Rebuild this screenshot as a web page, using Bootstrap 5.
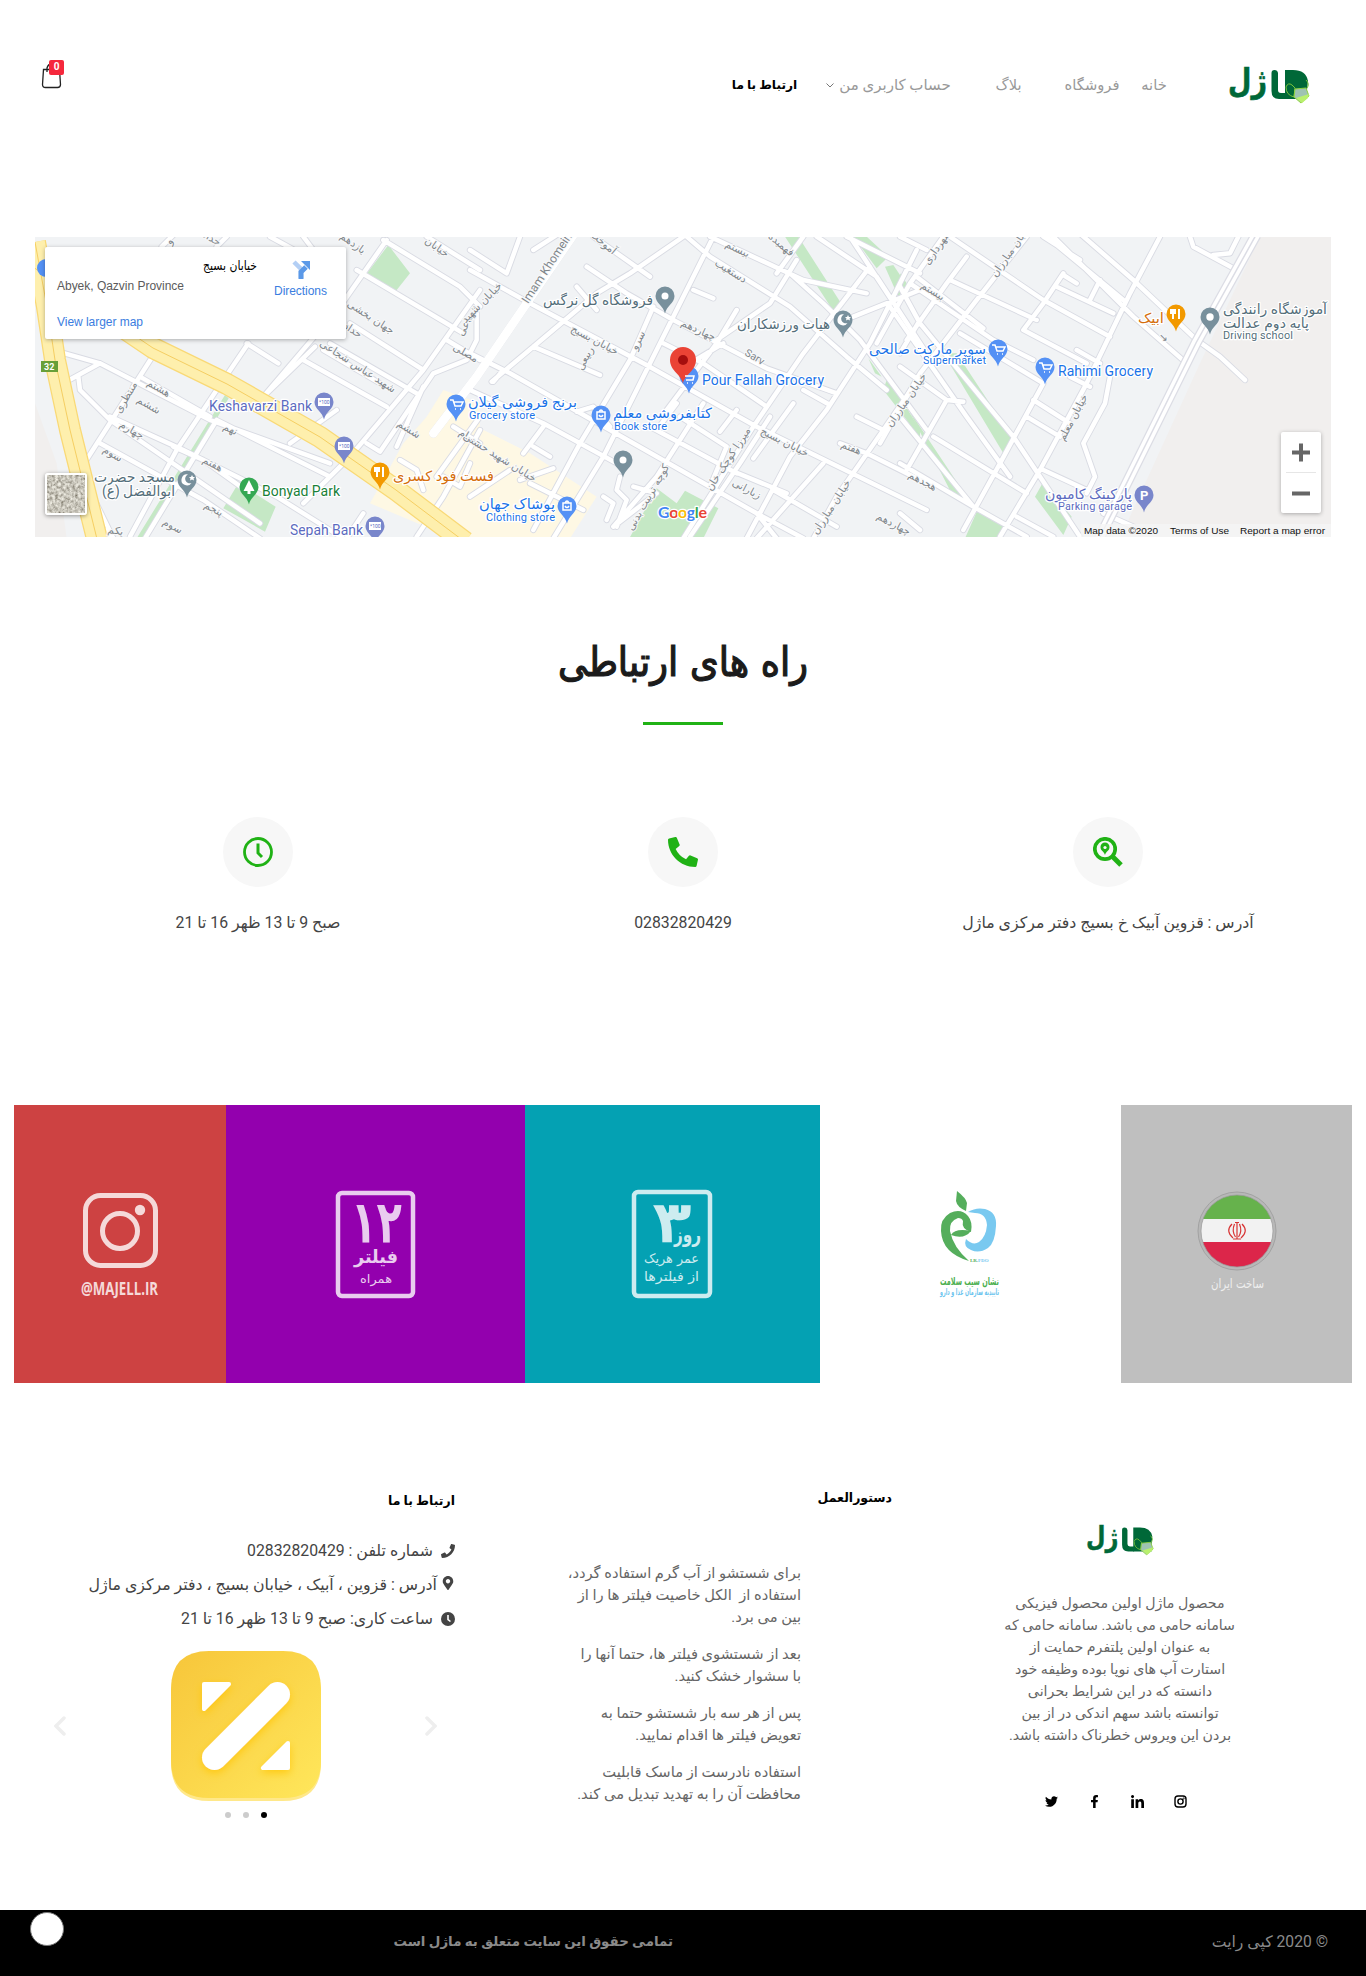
<!DOCTYPE html>
<html lang="fa" dir="rtl">
<head>
<meta charset="utf-8">
<meta name="viewport" content="width=device-width, initial-scale=1">
<title>ارتباط با ما - ماژل</title>
<link href="https://cdn.jsdelivr.net/npm/bootstrap@5.3.0/dist/css/bootstrap.min.css" rel="stylesheet">
<style>
body{font-family:Roboto,"DejaVu Sans",sans-serif;color:#444;background:#fff;overflow-x:hidden}
a{color:inherit;text-decoration:none}
svg{display:block}
svg text{direction:ltr}
.site-head{height:237px;padding:60px 56px 0 41px}
.main-nav{margin-right:60px;font-size:14.7px;line-height:24px;color:#999;padding-top:13px}
.main-nav a{white-space:nowrap;display:flex;justify-content:center;align-items:center}
.main-nav a:nth-child(1){width:28px;margin-left:22px}
.main-nav a:nth-child(2){width:52px;margin-left:43px}
.main-nav a:nth-child(3){width:29px;margin-left:43px}
.main-nav a:nth-child(4){width:125px;margin-left:29px;gap:5px;font-size:15px}
.main-nav a:nth-child(5){width:65px;color:#000;font-weight:700;font-size:12.2px}
.cart-count{position:absolute;left:8px;top:0;width:15px;height:15px;border-radius:2px;background:#f5283c;color:#fff;font:700 10px/14px Roboto,sans-serif;text-align:center}
.map-box{height:300px;margin:0 35px;position:relative}
.map-card{position:absolute;left:10px;top:10px;width:301px;height:92px;background:#fff;border-radius:2px;box-shadow:0 1px 4px rgba(0,0,0,.3);font:12px "Liberation Sans",sans-serif;color:#5b5b5b;direction:ltr}
.zoomer{position:absolute;left:1246px;top:195px;width:40px;height:81px;background:#fff;border-radius:2px;box-shadow:0 1px 4px rgba(0,0,0,.3)}
.sat{position:absolute;left:10px;top:236px;width:42px;height:42px;border:2px solid #fff;border-radius:3px;box-shadow:0 1px 4px rgba(0,0,0,.4)}
.ways{padding-top:101px;height:280px}
.ways h1{font-family:"DejaVu Sans Condensed","DejaVu Sans",sans-serif;font-size:40.8px;line-height:48px;font-weight:400;-webkit-text-stroke:1.2px #1b1b1b;color:#1b1b1b;margin:0;white-space:nowrap}
.bar{width:80px;height:3px;background:#20b215;margin-top:36px}
.info{height:288px;margin:0 45px}
.info-item{width:425px}
.disc{width:70px;height:70px;border-radius:50%;background:#f7f7f7}
.info p{font-size:15.8px;line-height:24px;margin:24px 0 0;white-space:nowrap}
.tiles{height:278px;margin:0 14px}
.t-gray{width:231px;background:#bfbfbf}.t-white{width:301px}.t-teal{width:295px;background:#04a1b3}.t-purple{width:299px;background:#9300ae}.t-red{width:212px;background:#cd4242}
.foot{height:527px}
.foot-about{width:230px;margin-right:131px;padding-top:139px}
.foot-text{font-size:14.2px;line-height:22px;color:#666;white-space:nowrap}
.foot-text p{margin:0 0 15px}
.about-copy{margin-top:36px}
.social-row{gap:30px;padding-top:49px;margin-right:8px}
.foot-guide{width:230px;margin-right:204px}
.foot-guide .foot-text{font-size:14.7px}
.foot h2{font-size:12.5px;line-height:22px;font-weight:700;color:#000;margin:0;white-space:nowrap}
.foot-guide h2{margin:104px -91px 53px 0}
.foot-contact{width:401px;margin-right:116px;padding-top:107px}
.foot-contact ul{margin-top:22px}
.foot-contact li{height:34px;font-size:15.8px;line-height:34px;white-space:nowrap}
.carousel-row{width:383px;margin-right:18px}
.carousel-row.stage{margin-top:15px}
.dots{gap:12px;padding-top:11px}
.dots i{width:6px;height:6px;border-radius:50%;background:#ccc}
.dots i:first-child{background:#000}
.bottom-bar{height:66px;background:#000;color:#8a8a8a;font-size:15.7px;line-height:64px;padding-right:38px;position:relative;white-space:nowrap}
.bottom-bar .copy{width:116px}
.bottom-bar .rights{margin-right:539px;font-weight:700;font-size:13.4px;width:279px}
.bubble{position:absolute;left:30px;top:2px;width:34px;height:34px;border-radius:50%;background:#fff;border:1px solid #777}
</style>
</head>
<body>
<svg width="0" height="0" class="position-absolute">
<defs>
<symbol id="logo" viewBox="0 0 82 40">
<text x="0" y="28" font-family="DejaVu Sans" font-weight="700" font-size="33" fill="#006838" stroke="#006838" stroke-width=".6" textLength="39" lengthAdjust="spacingAndGlyphs">ژل</text>
<path d="M43.500 9q0-3 3-3t3.500 3v17q0 3 3 3h5v6h-7q-7.500 0-7.500-8z" fill="#006838"/>
<path d="M57 6h8q13 0 15 11l-1 9v9H57z" fill="#006838"/>
<path d="M58 23q2-5 6-2l3 3-1 9q-8-2-8-10zM78 16q4 4 1 8" fill="none" stroke="#79c23b" stroke-width="1"/>
<path d="M67 25l11-1 3 8-8 7-7-6z" fill="#9fc3b2" stroke="#8fd13f" stroke-width="1"/><path d="M68 34l13-4-1 4-6 5z" fill="#b9f06d"/>
</symbol>
<symbol id="pin" viewBox="-10 -10 20 29"><path d="M0 17.500C-1.500 10-9.500 7-9.500 0a9.500 9.500 0 0 1 19 0C9.500 7 1.500 10 0 17.500z"/></symbol>
</defs>
</svg>

<header class="site-head d-flex align-items-start">
<a href="#"><svg width="82" height="40" class="mt-1"><use href="#logo"/></svg></a>
<nav class="main-nav d-flex">
<a href="#">خانه</a><a href="#">فروشگاه</a><a href="#">بلاگ</a>
<a href="#">حساب کاربری من <svg width="8" height="5" viewBox="0 0 8 5"><path d="M.5.5 4 4 7.500.5" fill="none" stroke="#777"/></svg></a>
<a href="#">ارتباط با ما</a>
</nav>
<a href="#" class="me-auto position-relative"><svg width="23" height="30" viewBox="0 0 23 30"><path d="M2.500 9.500h16l1 15q0 3-3 3h-12q-3 0-3-3zM6 12V8q1-4 5-4t5 4v4" fill="none" stroke="#222" stroke-width="1.300"/></svg><span class="cart-count">0</span></a>
</header>

<main>
<section class="map-box">
<svg width="1296" height="300" viewBox="0 0 1296 300" font-family="Roboto,'DejaVu Sans',sans-serif">
<defs>
<g id="roads" fill="none" stroke-linejoin="round" stroke-linecap="round">
<g transform="translate(-5 -7) scale(.33333)">
<path d="M380 360 150 720M655 340 560 480 440 660 300 920M560 570 345 925M855 350 700 500M1070 30 930 230M85 365 210 400 540 570 900 700M145 440 150 480 240 570 690 880M210 640 520 810 690 925M240 560 460 660 740 800 940 925M560 570 900 740M330 440 540 560M650 340 745 400M820 390 1070 530M900 340 1160 490M960 280 1180 420M980 120 1300 310M1060 30 1290 170 1350 230M700 500 930 230M960 680 1180 420 1350 180M1010 640 1050 665 1210 430 1310 390M1190 20 1350 120M395 50 430 15M820 20 850 60M720 20 830 80M960 680 820 820M1000 850 950 925M1180 470 1100 650M190 870 250 925M210 400 100 460M150 720 250 925M1110 690 1160 720 1180 780M1250 330 1350 390M1270 590 1350 640M1350 560 1220 740M430 650 520 690 660 790M590 20 560 50M880 360 1050 460M780 640 920 540"/>
<path d="M1160 920 1240 800 1350 600M1240 740 1290 770 1320 700"/>
</g>
<g transform="translate(435 -7) scale(.33333)">
<path d="M0 120 180 220 520 400 860 590 1370 840M0 480 220 580 440 700M0 370 120 430 420 600 860 850 1000 925M550 230 480 390 330 640 190 900M730 20 540 400 400 680 250 925M640 20 480 130 380 190 190 350 65 455M350 110 470 190 610 270 890 415 1100 490M320 170 380 240M370 20 540 140M650 20 720 80 960 230 1130 380 1250 480M720 20 1000 150 1190 190M580 340 700 400 890 530M800 240 740 340 590 540M980 90 900 220 740 330M1340 60 1200 340 1070 540 960 680 830 925M1200 110 1000 370 850 590 640 925M960 130 1060 220 1170 330 1370 600M1040 20 1220 140 1350 340M1140 20 1370 370M670 180 730 205M970 520 850 685M1000 480 1080 525M800 540 750 605M540 590 800 730M620 520 560 600M700 520 560 740 430 890M20 250 20 330 0 370M150 20 110 130 0 60M1130 20 1350 130M1350 180 1150 260M100 420 70 455M220 590 160 670M320 545 370 530 420 590M190 350 390 435M450 740 440 780 470 810 440 890M400 800 430 820 410 870M490 770 560 790 430 890M150 750 250 715M190 650 240 680M180 760 340 840M0 800 120 720M1110 640 1190 670 1370 760M1060 700 860 925M1160 560 1240 600 1100 800 1030 925M1240 600 1350 440M910 780 1100 890M660 920 810 700 900 560M1000 20 920 130 M190 60 260 15M630 560 770 650 720 770M780 720 950 790M860 850 920 925M660 400 760 340"/>
<path d="M310 15 170 220 20 440-110 610" stroke-width="26"/>
</g>
<g transform="translate(865 -7) scale(.33333)">
<path d="M150 20 430 210 630 320M0 20 80 60M130 20 30 160-70 340M200 80 140 160 20 330M380 20 230 210 60 430-60 640M460 20 470 30 700 260 860 400M545 15 700 150 890 330 960 380 1035 450M440 20 670 210M780 20 690 190 560 460 420 720 300 920M490 130 430 220 370 300M490 135 530 160M600 150 570 210M470 170 640 250M30 160 280 330 400 390M50 140 250 295M150 150 410 270M370 300 560 400M430 460 300 700 190 900M180 310 430 460M400 510 510 580 M380 560 430 590 480 620M530 360 600 400M430 20 540 90 M0 170 60 280 340 620 540 920M-30 230 200 560 330 740M0 410 140 510 190 515M140 510 60 650 20 720M0 700 220 830 380 920M100 620 380 790M430 720 560 780M350 860 460 920M630 440 615 520 550 640 585 740 560 790M0 850 60 900M870 20 880 50 1000 115M940 75 990 70 1015 20M510 440 570 470M610 850 700 890M60 270 0 370M0 560 220 830"/>
</g>
</g>
</defs>
<rect width="1296" height="300" fill="#f1f3f5"/>
<g transform="translate(-5 -7) scale(.33333)">
<path d="M15 520 80 700 110 925H15z" fill="#f1efee"/>
<path d="M1240 480 1350 520V925H1270L1020 820 1120 640 1190 560z" fill="#fef8e4"/>
<path d="M1075 45 1140 130 1090 193 1007 135zM585 495 596 505 350 925H320zM625 760 737 830 705 905 580 835z" fill="#c5e8c5"/>
</g>
<g transform="translate(435 -7) scale(.33333)">
<path d="M0 580 180 670 380 800 300 925H0z" fill="#fef8e4"/>
<path d="M560 775 620 820 645 782 745 835 700 925H478zM945 20H985L1120 230 1090 243 1010 120zM1150 20H1190L1255 80 1220 115zM1245 110 1270 105 1310 165 1285 200zM1195 385 1235 440 1215 430zM1250 450 1290 500 1350 600V630L1310 570 1240 480z" fill="#c5e8c5"/>
</g>
<g transform="translate(865 -7) scale(.33333)">
<path d="M1080 20H1296V925H660L900 400z" fill="#f1efee"/>
<path d="M130 370 170 370 335 620 310 670zM0 490 20 530 220 830 160 800zM235 835 325 880 300 925H195zM430 755 515 860 490 915 405 800zM0 130 20 160 0 190z" fill="#c5e8c5"/>
</g>
<use href="#roads" stroke="#d9dbe3" stroke-width="19"/>
<use href="#roads" stroke="#fff" stroke-width="13.500"/>
<path d="M1221-2 1161 106 1064 302" fill="none" stroke="#dcdde5" stroke-width="11"/><path d="M1221-2 1161 106 1064 302" fill="none" stroke="#fff" stroke-width="8.500"/><path d="M1221-2 1161 106 1064 302" fill="none" stroke="#dcdde5" stroke-width="1.500"/>
<g fill="none" stroke-linejoin="round">
<path d="M0 5 12 70 20 123 35 193 62 302M-2 30 118 111 192 147 285 200 361 253 430 305" stroke="#f9d976" stroke-width="22"/>
<path d="M0 5 12 70 20 123 35 193 62 302M-2 30 118 111 192 147 285 200 361 253 430 305" stroke="#feefad" stroke-width="19.500"/>
<path d="M0 5 12 70 20 123 35 193 62 302M-2 30 118 111 192 147 285 200 361 253 430 305" stroke="#f5ce62" stroke-width="1"/>
</g>
<rect x="6" y="124" width="17" height="11" fill="#689f38"/><text x="9" y="133" font-size="9" font-weight="700" fill="#fff">32</text>

<g font-size="10.500" fill="#80868b" stroke="#f8f9fa" stroke-width="2" paint-order="stroke" text-anchor="middle" font-family="'DejaVu Sans',sans-serif">
<text transform="translate(122 154) rotate(30)">هشتم</text><text transform="translate(112 171) rotate(30)">ششم</text><text transform="translate(95 196) rotate(30)">چهارم</text><text transform="translate(76 220) rotate(30)">سوم</text><text transform="translate(194 195) rotate(25)">نهم</text><text transform="translate(176 230) rotate(28)">هفتم</text><text transform="translate(177 275) rotate(28)">پنجم</text><text transform="translate(136 292) rotate(28)">سوم</text><text transform="translate(80 297) rotate(10)">یکم</text><text transform="translate(94 162) rotate(-60)">منتظری</text><text transform="translate(316 9) rotate(35)">یازدهم</text><text transform="translate(400 13) rotate(35)">خیابان</text><text transform="translate(334 83) rotate(33)">جهان بخشی</text><text transform="translate(316 96) rotate(33)">حداد</text><text transform="translate(321 132) rotate(33)">شهید عباس شجاعی</text><text transform="translate(372 195) rotate(33)">ششم</text><text transform="translate(436 85) rotate(-60)">شجاعی</text><text transform="translate(429 119) rotate(30)">مصلی</text><text transform="translate(434 204) rotate(30)">حسام</text><text transform="translate(137 6) rotate(-60)">و</text><text transform="translate(175 4) rotate(30)">حداد</text>
<text transform="translate(516 32) rotate(-57)" font-family="Roboto" font-size="12">Imam Khomeini</text><text transform="translate(566 8) rotate(40)">آموخت</text><text transform="translate(449 68) rotate(-45)">خیابان شهید</text><text transform="translate(558 106) rotate(28)">خیابان بسیج</text><text transform="translate(553 123) rotate(-62)">ربیعی</text><text transform="translate(606 105) rotate(-62)">سرو</text><text transform="translate(701 15) rotate(25)">بیستم</text><text transform="translate(744 10) rotate(40)">فهمیده</text><text transform="translate(694 37) rotate(32)">دستغیب</text><text transform="translate(662 96) rotate(25)">چهاردهم</text><text transform="translate(718 123) rotate(30)" font-family="Roboto">Sarv</text><text transform="translate(748 208) rotate(27)">خیابان بسیج</text><text transform="translate(696 224) rotate(-57)">میرزا کوچک خان</text><text transform="translate(710 255) rotate(28)">زبارانی</text><text transform="translate(616 262) rotate(-60)">کوچه تربیت بدنی</text><text transform="translate(463 223) rotate(32)">خیابان شهید حسنی</text><text transform="translate(815 214) rotate(22)">هفتم</text><text transform="translate(799 272) rotate(-57)">خیابان مبارزان</text><text transform="translate(857 290) rotate(28)">چهاردهم</text><text transform="translate(874 165) rotate(-55)">خیابان مبارزان</text><text transform="translate(905 12) rotate(-55)">شهرداری</text><text transform="translate(979 15) rotate(-55)">خیابان مبارزان</text><text transform="translate(896 57) rotate(32)">بیستم</text><text transform="translate(1041 182) rotate(-62)">خیابان معلم</text><text transform="translate(886 247) rotate(28)">هجدهم</text><text transform="translate(1126 103) rotate(45)">→</text>
</g>

<g>
<g fill="#7986cb"><use href="#pin" x="279" y="155" width="20" height="29"/><use href="#pin" x="299" y="199" width="20" height="29"/><use href="#pin" x="330" y="279" width="20" height="29"/><use href="#pin" x="1099" y="248" width="20" height="29"/></g>
<g fill="#5491f5"><use href="#pin" x="411" y="157" width="20" height="29"/><use href="#pin" x="556" y="168" width="20" height="29"/><use href="#pin" x="522" y="259" width="20" height="29"/><use href="#pin" x="644" y="129" width="20" height="29"/><use href="#pin" x="953" y="102" width="20" height="29"/><use href="#pin" x="1000" y="120" width="20" height="29"/><circle cx="11" cy="31" r="9"/></g>
<g fill="#78909c"><use href="#pin" x="620" y="49" width="20" height="29"/><use href="#pin" x="798" y="73" width="20" height="29"/><use href="#pin" x="578" y="213" width="20" height="29"/><use href="#pin" x="142" y="233" width="20" height="29"/><use href="#pin" x="1165" y="70" width="20" height="29"/></g>
<g fill="#f29900"><use href="#pin" x="335" y="225" width="20" height="29"/><use href="#pin" x="1131" y="67" width="20" height="29"/></g>
<use href="#pin" x="204" y="240" width="20" height="29" fill="#34a853"/>
<g fill="#fff"><circle cx="630" cy="59" r="3.500"/><circle cx="588" cy="223" r="3.500"/><circle cx="1175" cy="80" r="3.700"/><path d="M214 243l-5.500 11h4v3h3v-3h4z"/></g>
<g fill="#fff"><path d="M283 161h12v8h-12zM303 205h12v8h-12zM334 285h12v8h-12z"/></g>
<g font-size="5" fill="#5c6bc0"><text x="284" y="167">*100</text><text x="304" y="211">*100</text><text x="335" y="291">*100</text></g>
<g fill="none" stroke="#fff" stroke-width="1.500"><path id="ct" d="M415 163h3l2 6h6l2-4h-9m1 7h1m4 0h1"/><use href="#ct" x="542" y="-55"/><use href="#ct" x="589" y="-37"/><path id="bg" d="M562 175h8v7h-8zM564 175q2-4 4 0M564 178q2 3 4 0"/><use href="#bg" x="-34" y="91"/><path id="fk" stroke-width="2" d="M342 230v10M348 230v10M340 230v4h4v-4"/><use href="#fk" x="796" y="-158"/></g>
<g fill="#fff"><path id="moon" d="M809 77.500a5.500 5.500 0 1 0 3.500 8.500 4.500 4.500 0 0 1-3.500-8.500zM813 78l1 2h2l-1.500 1.500.5 2-2-1-2 1 .5-2-1.500-1.500h2z"/><use href="#moon" x="-656" y="160"/><text x="1105" y="263" font-weight="700" font-size="13">P</text></g>
<path d="M648 147C647 138 635 134 635 123a13 13 0 0 1 26 0C661 134 649 138 648 147z" fill="#ea4335"/><circle cx="648" cy="123" r="5" fill="#a50e0e"/>
<path d="M650 139h9l-1 4h-7m1 3h1m4 0h1" fill="none" stroke="#fff" stroke-width="1.500"/>
</g>

<g stroke="#fff" stroke-width="2.500" paint-order="stroke" stroke-linejoin="round" font-size="14">
<g fill="#5c6bc0"><text x="174" y="174" textLength="103">Keshavarzi Bank</text><text x="255" y="298" textLength="73">Sepah Bank</text><text x="1010" y="262" textLength="87" lengthAdjust="spacingAndGlyphs">پارکینگ کامیون</text><text x="1023" y="273" font-size="11" textLength="74">Parking garage</text></g>
<g fill="#1a73e8"><text x="667" y="148" textLength="122">Pour Fallah Grocery</text><text x="1023" y="139" textLength="95">Rahimi Grocery</text><text x="433" y="170" textLength="109" lengthAdjust="spacingAndGlyphs">برنج فروشی گیلان</text><text x="434" y="182" font-size="11" textLength="66">Grocery store</text><text x="578" y="181" textLength="99" lengthAdjust="spacingAndGlyphs">کتابفروشی معلم</text><text x="579" y="193" font-size="11" textLength="53">Book store</text><text x="444" y="272" textLength="76" lengthAdjust="spacingAndGlyphs">پوشاک جهان</text><text x="451" y="284" font-size="11" textLength="69">Clothing store</text><text x="834" y="117" textLength="117" lengthAdjust="spacingAndGlyphs">سوپر مارکت صالحی</text><text x="888" y="127" font-size="11" textLength="63">Supermarket</text></g>
<g fill="#546e7a"><text x="508" y="68" textLength="110" lengthAdjust="spacingAndGlyphs">فروشگاه گل نرگس</text><text x="702" y="92" textLength="93" lengthAdjust="spacingAndGlyphs">هیات ورزشکاران</text><text x="59" y="245" textLength="81" lengthAdjust="spacingAndGlyphs">مسجد حضرت</text><text x="67" y="259" textLength="73" lengthAdjust="spacingAndGlyphs">ابوالفضل (ع)</text><text x="1188" y="77" textLength="104" lengthAdjust="spacingAndGlyphs">آموزشگاه رانندگی</text><text x="1188" y="91" textLength="86" lengthAdjust="spacingAndGlyphs">پایه دوم عدالت</text><text x="1188" y="102" font-size="11" textLength="70">Driving school</text></g>
<g fill="#d56e0c"><text x="358" y="244" textLength="101" lengthAdjust="spacingAndGlyphs">فست فود کسری</text><text x="1103" y="86" textLength="26" lengthAdjust="spacingAndGlyphs">ابیک</text></g>
<text x="227" y="259" fill="#188038" textLength="78">Bonyad Park</text>
<text x="623" y="281" font-family="Lato,sans-serif" font-weight="700" font-size="16" textLength="49"><tspan fill="#4285f4">G</tspan><tspan fill="#ea4335">o</tspan><tspan fill="#fbbc05">o</tspan><tspan fill="#4285f4">g</tspan><tspan fill="#34a853">l</tspan><tspan fill="#ea4335">e</tspan></text>
</g>
<path d="M1046 287h250v13h-250z" fill="#f5f5f5" opacity=".8"/>
<g font-family="'Liberation Sans',sans-serif" font-size="9.500" fill="#111"><text x="1049" y="297" textLength="74" lengthAdjust="spacingAndGlyphs">Map data ©2020</text><text x="1135" y="297" textLength="59" lengthAdjust="spacingAndGlyphs">Terms of Use</text><text x="1205" y="297" textLength="85" lengthAdjust="spacingAndGlyphs">Report a map error</text></g>
</svg>
<div class="map-card">
<svg width="301" height="92"><text x="158" y="23" font-family="'DejaVu Sans'" font-size="13" fill="#000" textLength="54" lengthAdjust="spacingAndGlyphs">خیابان بسیج</text><text x="12" y="43" fill="#5b5b5b" textLength="127">Abyek, Qazvin Province</text><text x="12" y="79" fill="#3a7de0" textLength="86">View larger map</text><text x="229" y="48" fill="#3a7de0" textLength="53">Directions</text><path d="M249 15 256 22v9" fill="none" stroke="#b3cff5" stroke-width="4.500"/><path d="M256 32v-7l5-5" fill="none" stroke="#5b99e8" stroke-width="5"/><path d="M256 14h9v9z" fill="#5b99e8"/></svg>
</div>
<div class="sat"><svg width="38" height="38"><filter id="grain"><feTurbulence type="fractalNoise" baseFrequency=".35" numOctaves="3" seed="4"/><feColorMatrix values="1 0 0 0 .08 1 0 0 0 .06 .95 0 0 0 .02 0 0 0 0 1"/></filter><rect width="38" height="38" filter="url(#grain)"/></svg></div>
<div class="zoomer"><svg width="40" height="81"><path d="M11 20.500h18M20 11.500v18M11 61.500h18" stroke="#666" stroke-width="4"/><path d="M5 40.500h30" stroke="#e6e6e6"/></svg></div>
</section>

<section class="ways d-flex flex-column align-items-center"><h1>راه های ارتباطی</h1><div class="bar"></div></section>

<section class="info d-flex justify-content-center">
<div class="info-item d-flex flex-column align-items-center"><div class="disc d-flex align-items-center justify-content-center"><svg width="30" height="30" viewBox="0 0 30 30"><circle cx="12" cy="12" r="10.200" fill="none" stroke="#20b215" stroke-width="3.700"/><path d="M20 20l8 8" stroke="#20b215" stroke-width="5"/><path d="M12 18C11 14 7.500 14 7.500 10a4.500 4.500 0 0 1 9 0c0 4-3.500 4-4.500 8z" fill="#20b215"/><circle cx="12" cy="10.500" r="1.600" fill="#f7f7f7"/></svg></div><p>آدرس : قزوین آبیک خ بسیج دفتر مرکزی ماژل</p></div>
<div class="info-item d-flex flex-column align-items-center"><div class="disc d-flex align-items-center justify-content-center"><svg width="30" height="30" viewBox="0 0 512 512" fill="#20b215"><path d="M497.390 361.800l-112-48a24 24 0 0 0-28 6.900l-49.600 60.600A370.660 370.660 0 0 1 130.600 204.110l60.600-49.600a23.940 23.940 0 0 0 6.900-28l-48-112A24.160 24.160 0 0 0 122.600.61l-104 24A24 24 0 0 0 0 48c0 256.500 207.900 464 464 464a24 24 0 0 0 23.400-18.600l24-104a24.290 24.290 0 0 0-14.010-27.600z"/></svg></div><p>02832820429</p></div>
<div class="info-item d-flex flex-column align-items-center"><div class="disc d-flex align-items-center justify-content-center"><svg width="30" height="30" viewBox="0 0 30 30" fill="none" stroke="#20b215"><circle cx="15" cy="15" r="13.500" stroke-width="2.800"/><path d="M15 6.500v9.500l4 4" stroke-width="3"/></svg></div><p>صبح 9 تا 13 ظهر 16 تا 21</p></div>
</section>

<section class="tiles d-flex">
<div class="t-gray"><svg width="231" height="278"><clipPath id="fl"><circle cx="116" cy="126" r="36"/></clipPath><circle cx="116" cy="126" r="39" fill="#b8b8b8" stroke="#a2a2a2"/><g clip-path="url(#fl)"><path d="M80 90h72v24H80z" fill="#66b24c"/><path d="M80 114h72v23H80z" fill="#f2f2f2"/><path d="M80 137h72v25H80z" fill="#dc264a"/></g><circle cx="116" cy="126" r="36" fill="none" stroke="#999" stroke-width=".7"/><path d="M116 117v17M111 119q-7 7 1 14M121 119q7 7-1 14M113.500 119q-3 7 1 13M118.500 119q3 7-1 13M112 134h8M114 117.500h4" stroke="#d83434" stroke-width="1.200" fill="none"/><text x="90" y="183" font-family="'DejaVu Sans'" font-size="13" fill="#eee" textLength="53" lengthAdjust="spacingAndGlyphs">ساخت ایران</text></svg></div>
<div class="t-white"><svg width="301" height="278"><path d="M137 86q9 7 10 12l-1 8q-9-4-10-10z" fill="#55ae5c"/><path d="M148 107q8-5 17-3 12 3 11 17-1 17-8 22-9 6-17 2-8-3-5-11 7 7 13 3 7-5 8-17-1-12-12-12z" fill="#79c9f0"/><path d="M151 127q2-10-3-16-7-8-18-3-10 6-9 18 1 22 28 30-16-14-19-30-1-10 8-13 4 0 5 3-2 8 8 11z" fill="#55ae5c"/><path d="M131 130q4-7 20-4-7 9-20 4z" fill="#55ae5c"/><text x="150" y="157" font-family="'Liberation Serif'" font-size="5" font-weight="700" fill="#55ae5c">I.R.<tspan fill="#79c9f0">FDO</tspan></text><g font-family="'DejaVu Sans'" font-weight="700"><text x="120" y="180" font-size="11" fill="#4caf50" textLength="59" lengthAdjust="spacingAndGlyphs">نشان سیب سلامت</text><text x="120" y="190" font-size="9" fill="#6cc4ee" textLength="59" lengthAdjust="spacingAndGlyphs">تاییدیه سازمان غذا و دارو</text></g></svg></div>
<div class="t-teal"><svg width="295" height="278" font-family="'DejaVu Sans'" fill="#cdecf0"><rect x="109" y="87" width="76" height="104" rx="4" fill="none" stroke="#cdecf0" stroke-width="4.500"/><text x="128" y="136" font-size="54" stroke="#cdecf0" stroke-width="2.500" textLength="38" lengthAdjust="spacingAndGlyphs">۳</text><text x="149" y="137" font-size="21" font-weight="700" textLength="27" lengthAdjust="spacingAndGlyphs">روز</text><text x="119" y="158" font-size="13" textLength="55" lengthAdjust="spacingAndGlyphs">عمر هریک</text><text x="119" y="176" font-size="13" textLength="55" lengthAdjust="spacingAndGlyphs">از فیلترها</text></svg></div>
<div class="t-purple"><svg width="299" height="278" font-family="'DejaVu Sans'" fill="#e9ccef"><rect x="112" y="88" width="75" height="103" rx="4" fill="none" stroke="#e9ccef" stroke-width="4.500"/><text x="126" y="136" font-size="54" stroke="#e9ccef" stroke-width="3" textLength="50" lengthAdjust="spacingAndGlyphs">۱۲</text><text x="128" y="158" font-size="18" font-weight="700" textLength="44" lengthAdjust="spacingAndGlyphs">فیلتر</text><text x="134" y="178" font-size="12" textLength="32" lengthAdjust="spacingAndGlyphs">همراه</text></svg></div>
<div class="t-red"><svg width="212" height="278" fill="none" stroke="#f5d9d9"><rect x="71.500" y="90.500" width="70" height="70" rx="15" stroke-width="5"/><circle cx="106" cy="126" r="17.500" stroke-width="5"/><circle cx="126" cy="105" r="5.200" fill="#f5d9d9" stroke="none"/><text x="67" y="190" font-family="'Open Sans',sans-serif" font-weight="700" font-size="17" fill="#f5d9d9" stroke="none" textLength="77" lengthAdjust="spacingAndGlyphs">@MAJELL.IR</text></svg></div>
</section>
</main>

<footer>
<div class="foot d-flex align-items-start">
<div class="foot-about">
<svg width="68" height="34" viewBox="0 0 82 40" class="mx-auto"><use href="#logo" width="82" height="40"/></svg>
<div class="foot-text about-copy text-center">محصول ماژل اولین محصول فیزیکی<br>سامانه حامی می باشد. سامانه حامی که<br>به عنوان اولین پلتفرم حمایت از<br>استارت آپ های نوپا بوده وظیفه خود<br>دانسته که در این شرایط بحرانی<br>توانسته باشد سهم اندکی در از بین<br>بردن این ویروس خطرناک داشته باشد.</div>
<div class="social-row d-flex justify-content-center">
<svg width="13" height="13" viewBox="0 0 13 13" fill="none" stroke="#000" stroke-width="1.400"><rect x="1" y="1" width="11" height="11" rx="3"/><circle cx="6.500" cy="6.500" r="2.600"/><circle cx="9.600" cy="3.400" r=".3"/></svg>
<svg width="13" height="13" viewBox="0 0 448 448"><path d="M100.280 448H7.400V148.900h92.880zM53.790 108.100C24.090 108.100 0 83.500 0 53.800a53.790 53.790 0 0 1 107.580 0c0 29.700-24.100 54.300-53.790 54.300zM447.900 448h-92.680V302.400c0-34.700-.7-79.200-48.290-79.200-48.290 0-55.690 37.700-55.690 76.700V448h-92.780V148.900h89.080v40.800h1.300c12.400-23.500 42.690-48.300 87.880-48.300 94 0 111.280 61.900 111.280 142.300V448z"/></svg>
<svg width="13" height="13" viewBox="0 0 320 512"><path d="M279.140 288l14.220-92.660h-88.910v-60.130c0-25.350 12.420-50.060 52.240-50.060h40.420V6.260S260.430 0 225.360 0c-73.220 0-121.080 44.380-121.080 124.720v70.620H22.890V288h81.390v224h100.170V288z"/></svg>
<svg width="13" height="13" viewBox="0 0 512 512"><path d="M459.370 151.716c.325 4.548.325 9.097.325 13.645 0 138.720-105.583 298.558-298.558 298.558-59.452 0-114.680-17.219-161.137-47.106 8.447.974 16.568 1.299 25.340 1.299 49.055 0 94.213-16.568 130.274-44.832-46.132-.975-84.792-31.188-98.112-72.772 6.498.974 12.995 1.624 19.818 1.624 9.421 0 18.843-1.300 27.614-3.573-48.081-9.747-84.143-51.980-84.143-102.985v-1.299c13.969 7.797 30.214 12.670 47.431 13.319-28.264-18.843-46.781-51.005-46.781-87.391 0-19.492 5.197-37.360 14.294-52.954 51.655 63.675 129.300 105.258 216.365 109.807-1.624-7.797-2.599-15.918-2.599-24.040 0-57.828 46.782-104.934 104.934-104.934 30.213 0 57.502 12.670 76.670 33.137 23.715-4.548 46.456-13.320 66.599-25.340-7.798 24.366-24.366 44.833-46.132 57.827 21.117-2.273 41.584-8.122 60.426-16.243-14.292 20.791-32.161 39.308-52.628 54.253z"/></svg>
</div>
</div>
<div class="foot-guide">
<h2>دستورالعمل</h2>
<div class="foot-text">
<p>برای شستشو از آب گرم استفاده گردد،<br>استفاده از&nbsp; الکل خاصیت فیلتر ها را از<br>بین می برد.</p>
<p>بعد از شستشوی فیلتر ها، حتما آنها را<br>با سشوار خشک کنید.</p>
<p>پس از هر سه بار شستشو حتما به<br>تعویض فیلتر ها اقدام نمایید.</p>
<p>استفاده نادرست از ماسک قابلیت<br>محافظت آن را به تهدید تبدیل می کند.</p>
</div>
</div>
<div class="foot-contact">
<h2>ارتباط با ما</h2>
<ul class="list-unstyled mb-0 p-0">
<li class="d-flex align-items-center"><svg width="14" height="14" viewBox="0 0 512 512" fill="#444" class="ms-2"><path d="M493.400 24.600l-104-24c-11.300-2.600-22.900 3.300-27.500 13.900l-48 112c-4.200 9.800-1.400 21.300 6.900 28l60.600 49.600c-36 76.700-98.900 140.500-177.200 177.200l-49.600-60.600c-6.800-8.300-18.200-11.100-28-6.900l-112 48C3.900 366.500-2 378.100.6 389.400l24 104C27.100 504.200 36.700 512 48 512c256.100 0 464-207.500 464-464 0-11.200-7.700-20.900-18.600-23.400z"/></svg><span>شماره تلفن : 02832820429</span></li>
<li class="d-flex align-items-center"><svg width="14" height="14" viewBox="0 0 384 512" fill="#444" class="mb-1 ms-1"><path d="M172.268 501.670C26.970 291.031 0 269.413 0 192 0 85.961 85.961 0 192 0s192 85.961 192 192c0 77.413-26.970 99.031-172.268 309.670-9.535 13.774-29.930 13.773-39.464 0zM192 272c44.183 0 80-35.817 80-80s-35.817-80-80-80-80 35.817-80 80 35.817 80 80 80z"/></svg><span>آدرس : قزوین ، آبیک ، خیابان بسیج ، دفتر مرکزی ماژل</span></li>
<li class="d-flex align-items-center"><svg width="14" height="14" viewBox="0 0 14 14" class="ms-2"><circle cx="7" cy="7" r="7" fill="#444"/><path d="M7 3v4.500l2.500 2" fill="none" stroke="#fff" stroke-width="1.600"/></svg><span>ساعت کاری: صبح 9 تا 13 ظهر 16 تا 21</span></li>
</ul>
<div class="carousel-row stage d-flex justify-content-between align-items-center">
<svg width="12" height="20" viewBox="0 0 12 20"><path d="M2 2l8 8-8 8" fill="none" stroke="#eee" stroke-width="3.500" stroke-linecap="round"/></svg>
<svg width="150" height="150" viewBox="0 0 150 150"><defs><linearGradient id="yg" x1="0" y1="0" x2="1" y2="1"><stop offset="0" stop-color="#f7c63a"/><stop offset="1" stop-color="#ffe75b"/></linearGradient><filter id="gl" x="-30%" y="-30%" width="160%" height="160%"><feDropShadow dx="0" dy="3" stdDeviation="4" flood-color="#ffc400" flood-opacity=".8"/></filter></defs><path d="M38 3h74q38 0 38 38v71q0 38-38 38H38q-38 0-38-38V41Q0 3 38 3z" fill="#ffe88a"/><path d="M38 0h74q38 0 38 38v71q0 38-38 38H38q-38 0-38-38V38Q0 0 38 0z" fill="url(#yg)"/><g fill="#fff" stroke="#fff" stroke-linejoin="round" filter="url(#gl)"><path d="M43.500 106.500 106.500 43.500" stroke-width="25" stroke-linecap="round"/><path d="M33 33h25L33 58zM117 117V92L92 117z" stroke-width="4"/></g></svg>
<svg width="12" height="20" viewBox="0 0 12 20"><path d="M10 2 2 10l8 8" fill="none" stroke="#eee" stroke-width="3.500" stroke-linecap="round"/></svg>
</div>
<div class="dots carousel-row d-flex justify-content-center"><i></i><i></i><i></i></div>
</div>
</div>
<div class="bottom-bar d-flex"><span class="copy">© 2020 کپی رایت</span><span class="rights">تمامی حقوق این سایت متعلق به ماژل است</span><span class="bubble"></span></div>
</footer>
<script src="https://cdn.jsdelivr.net/npm/bootstrap@5.3.0/dist/js/bootstrap.bundle.min.js"></script>
</body>
</html>
